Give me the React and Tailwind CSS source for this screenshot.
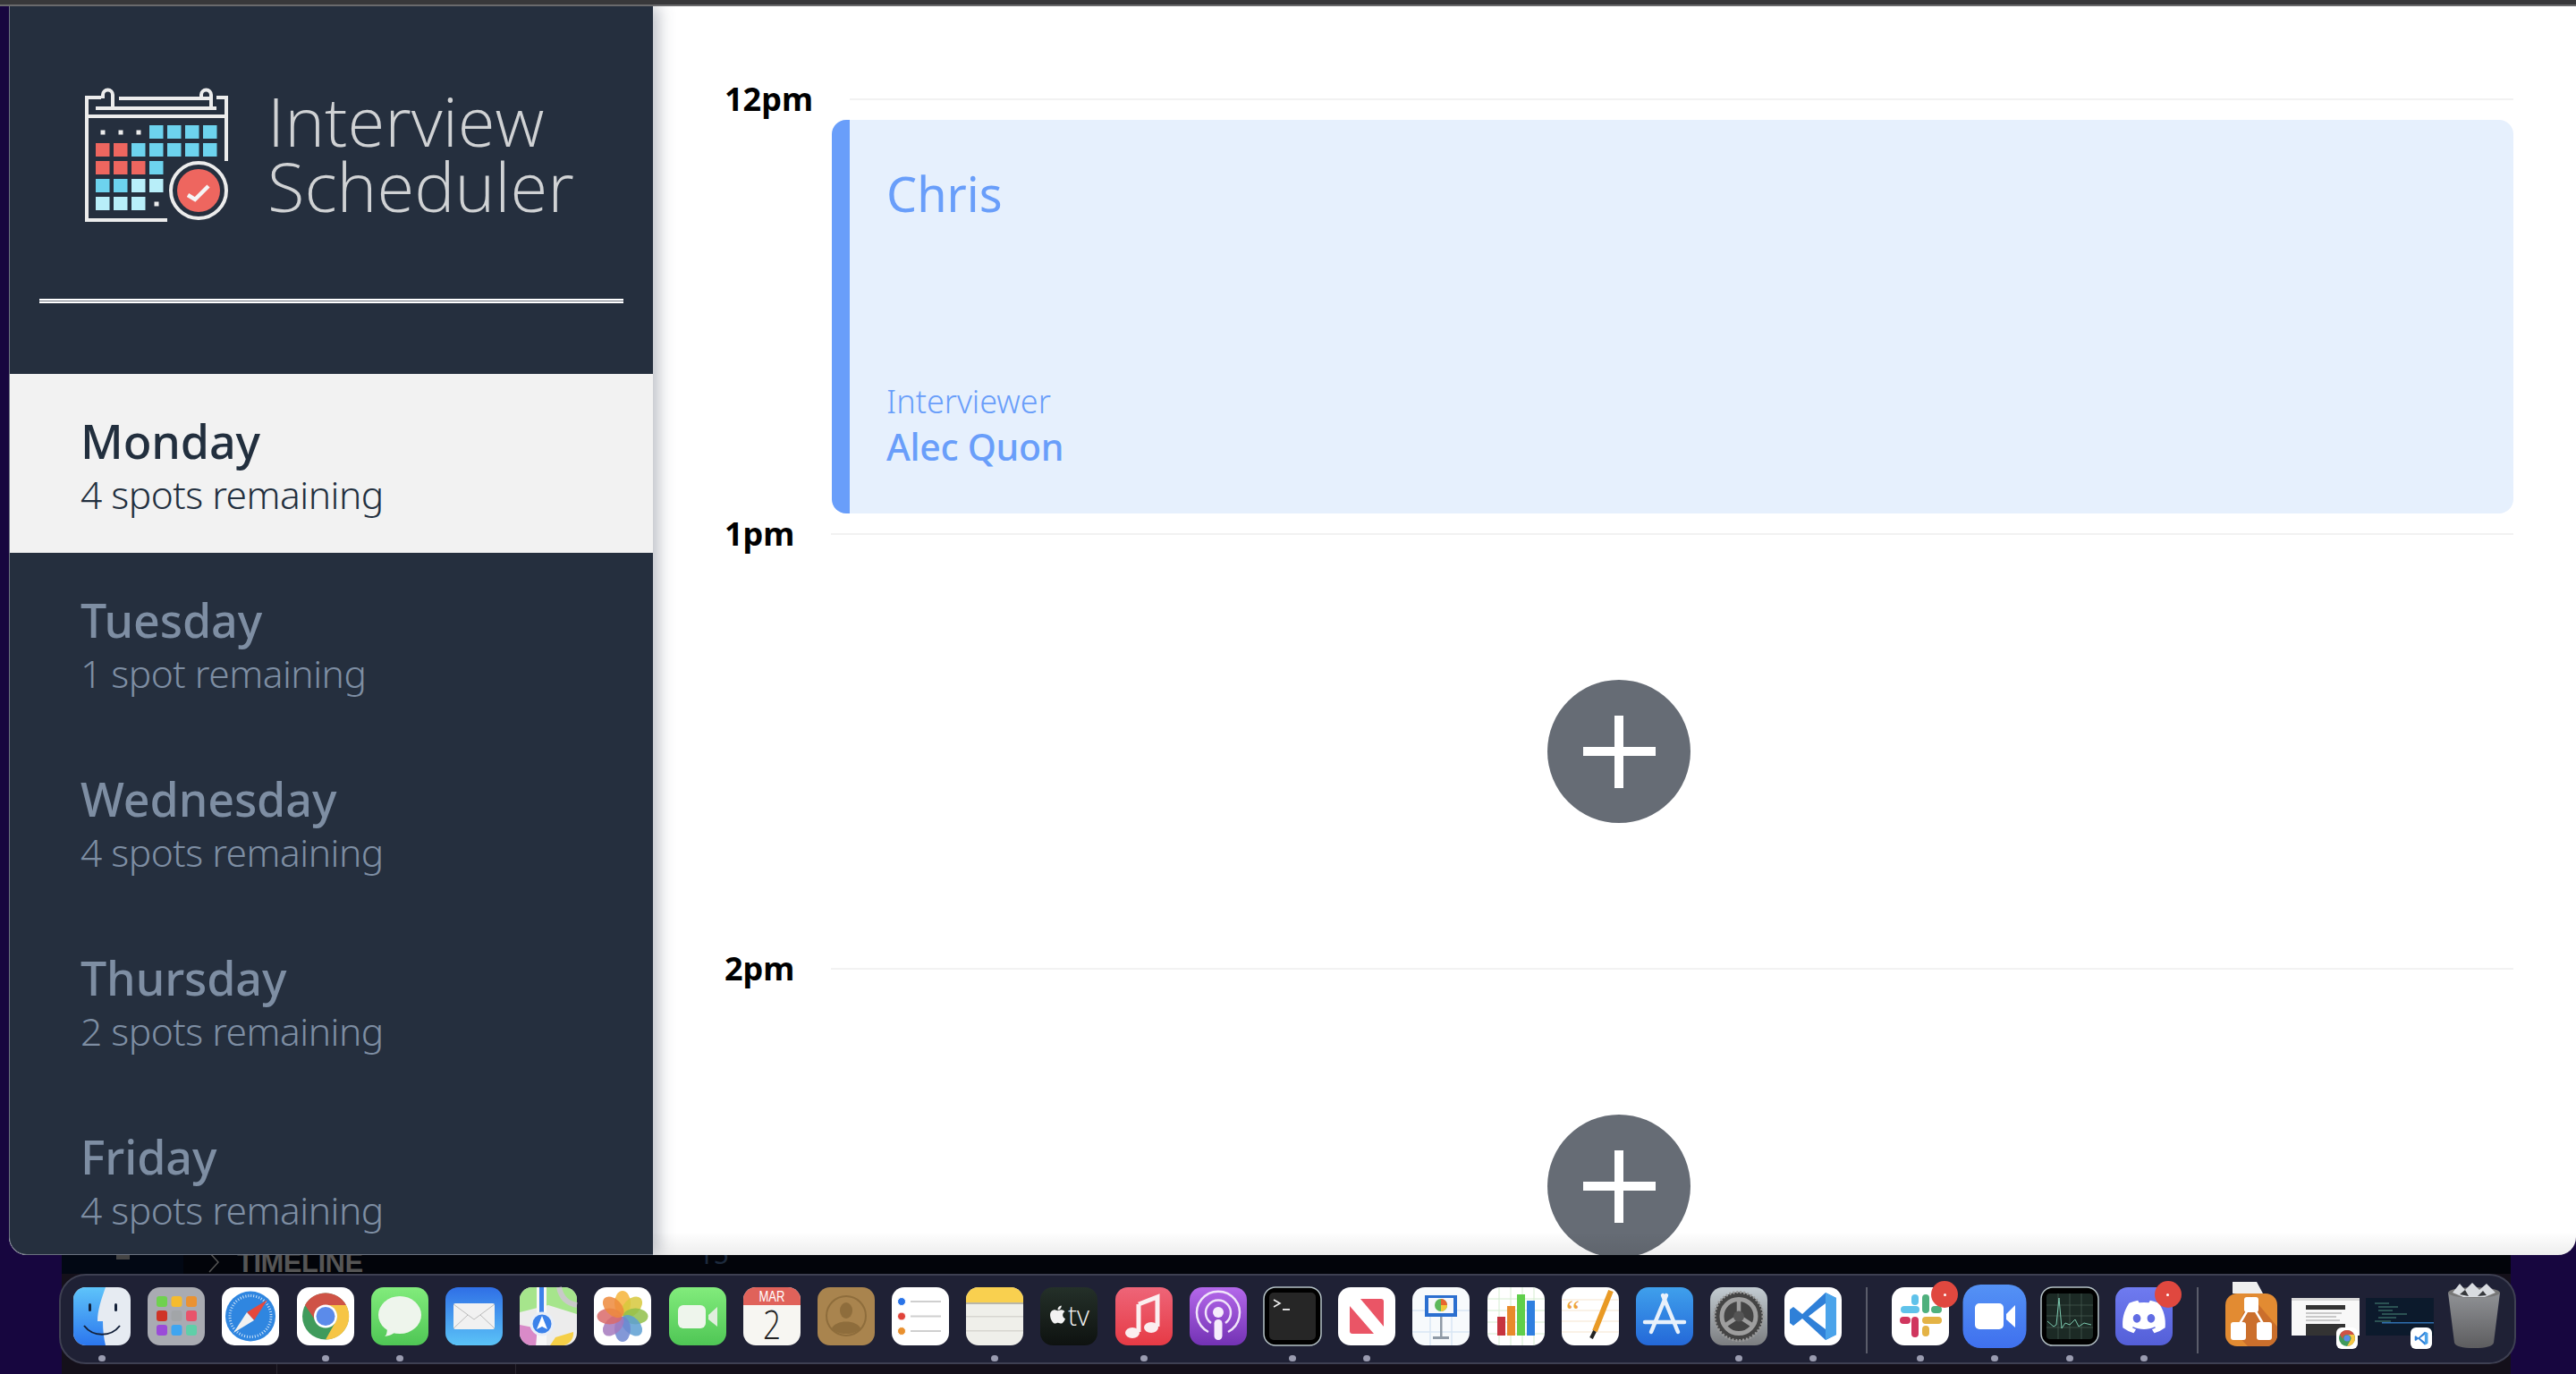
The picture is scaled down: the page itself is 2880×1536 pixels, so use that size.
import React from "react";
import { FaApple, FaDiscord } from "react-icons/fa";

const days = [
  { name: "Monday", spots: "4 spots remaining", active: true },
  { name: "Tuesday", spots: "1 spot remaining" },
  { name: "Wednesday", spots: "4 spots remaining" },
  { name: "Thursday", spots: "2 spots remaining" },
  { name: "Friday", spots: "4 spots remaining" },
];

const Logo = () => {
  const cols = [37, 57, 77, 97, 117, 137, 157];
  const rows = [60, 80, 100, 120, 140];
  const c = "#6dd3ee";
  const r = "#ee665f";
  const l = "#b8eef9";
  const grid = [
    [0, 0, 0, c, c, c, c],
    [r, r, c, c, c, c, c],
    [r, r, r, c, 0, 0, 0],
    [c, c, l, l, 0, 0, 0],
    [l, l, l, 0, 0, 0, 0],
  ];
  return (
    <svg viewBox="25 18 160 150" className="w-[160px] h-[150px] shrink-0">
      <g fill="none" stroke="#ececec" strokeWidth="4">
        <path d="M43 29H27V166H117" />
        <path d="M63 30H164" />
        <path d="M172 29H183V100" />
        <path d="M37 41H172" />
        <path d="M27 50H183" />
        <path d="M45 30V26a5.5 5.5 0 0 1 11 0V41" />
        <path d="M155 30V26a5.5 5.5 0 0 1 11 0V41" />
        <circle cx="152" cy="133" r="31" />
      </g>
      {grid.map((row, y) =>
        row.map((fill, x) =>
          fill ? <rect key={`${x}-${y}`} x={cols[x]} y={rows[y]} width="15.5" height="15" fill={fill} /> : null
        )
      )}
      {[45, 65, 85].map((x) => (
        <rect key={x} x={x - 2.5} y="65.5" width="5" height="5" fill="#ececec" />
      ))}
      <rect x="102.5" y="145.5" width="5" height="5" fill="#ececec" />
      <circle cx="152" cy="133" r="24" fill="#ee665f" />
      <path d="M140 138l8 5 15-15" fill="none" stroke="#f5f5f5" strokeWidth="4.5" />
    </svg>
  );
};

const DayItem = ({ name, spots, active }) => (
  <div className={`h-[200px] shrink-0 flex flex-col justify-center pl-[79px] pt-[6px] ${active ? "bg-[#f2f2f2] text-[#222f3e]" : "text-[#7e8ea3]"}`}>
    <div className="text-[52px] leading-[62px] font-medium tracking-[-0.1px]">{name}</div>
    <div className="text-[42.5px] leading-[57px] font-light tracking-[-0.5px]">{spots}</div>
  </div>
);

const TimeRow = ({ label }) => (
  <div className="flex items-center h-[2px] gap-[41px]">
    <div className="text-[#000] text-[36px] font-bold leading-none whitespace-nowrap">{label}</div>
    <div className="flex-1 h-[2px] bg-[#f2f2f2]" />
  </div>
);

const AddButton = () => (
  <div className="h-[484px] flex items-center justify-center shrink-0">
    <div className="relative w-[160px] h-[160px] rounded-full bg-[#666c75] flex items-center justify-center">
      <div className="w-[81px] h-[10px] bg-white" />
      <div className="absolute w-[10px] h-[81px] bg-white" />
    </div>
  </div>
);

/* dock icons, all drawn in a 64x65 box */
const Svg = ({ children }) => (
  <svg viewBox="0 0 64 65" className="w-16 h-[65px] overflow-visible block">
    {children}
  </svg>
);
const Tile = ({ fill = "#fff" }) => <rect width="64" height="65" rx="14" fill={fill} />;
const Grad = ({ id, from, to }) => (
  <defs>
    <linearGradient id={id} x1="0" y1="0" x2="0" y2="1">
      <stop offset="0" stopColor={from} />
      <stop offset="1" stopColor={to} />
    </linearGradient>
  </defs>
);

const Finder = () => (
  <Svg>
    <Grad id="fd" from="#5ec4fa" to="#2b76ee" />
    <Tile fill="#e6ebf2" />
    <path d="M14 0H36C31 14 27 26 27 38H33C33 48 34 57 36 65H14A14 14 0 0 1 0 51V14A14 14 0 0 1 14 0Z" fill="url(#fd)" />
    <rect x="17" y="18" width="3" height="9" rx="1.5" fill="#14213a" />
    <rect x="46" y="18" width="3" height="9" rx="1.5" fill="#14213a" />
    <path d="M12 43C22 56 42 56 52 43" fill="none" stroke="#14213a" strokeWidth="2" />
  </Svg>
);

const Launchpad = () => {
  const colors = ["#6fd14f", "#f5bb2e", "#ea9232", "#cf3427", "#a2a5a8", "#e8536b", "#9a4bd8", "#3fa5f0", "#5fcfa8"];
  return (
    <Svg>
      <Tile fill="#a9abb2" />
      {colors.map((fill, i) => (
        <rect key={fill} x={10 + (i % 3) * 16.5} y={10 + Math.floor(i / 3) * 16} width="12" height="12" rx="3" fill={fill} />
      ))}
    </Svg>
  );
};

const Safari = () => (
  <Svg>
    <Tile />
    <circle cx="32" cy="32.5" r="28" fill="#2f86e0" />
    <circle cx="32" cy="32.5" r="23" fill="none" stroke="#cfe4f8" strokeWidth="3" strokeDasharray="1 2" />
    <path d="M51 14L36 37L28 28Z" fill="#e5483c" />
    <path d="M13 51L36 37L28 28Z" fill="#f1f1f1" />
  </Svg>
);

const Chrome = () => (
  <Svg>
    <Tile />
    <circle cx="32" cy="32.5" r="26" fill="#3f9b5c" />
    <path d="M32 6.5A26 26 0 0 1 55 20H32A12.5 12.5 0 0 0 20.5 37L9 20A26 26 0 0 1 32 6.5Z" fill="#cf5346" />
    <path d="M55 20A26 26 0 0 1 32 58.5L43 39A12.5 12.5 0 0 0 32 20Z" fill="#f6c545" />
    <circle cx="32" cy="32.5" r="13" fill="#fff" />
    <circle cx="32" cy="32.5" r="10.5" fill="#5b8bea" />
  </Svg>
);

const Messages = () => (
  <Svg>
    <Grad id="ms" from="#82ec7c" to="#4fc655" />
    <Tile fill="url(#ms)" />
    <ellipse cx="32" cy="31" rx="24" ry="21" fill="#eef5ec" />
    <path d="M18 44C18 50 17 54 15 55C22 54 27 51 29 48Z" fill="#eef5ec" />
  </Svg>
);

const Mail = () => (
  <Svg>
    <Grad id="ml" from="#2f6fe6" to="#5bc3f7" />
    <Tile fill="url(#ml)" />
    <rect x="9" y="18" width="46" height="29" rx="2" fill="#f1f1f1" />
    <path d="M9 19L32 36L55 19M9 46L25 31M55 46L39 31" fill="none" stroke="#bcbcbc" strokeWidth="1" />
  </Svg>
);

const Maps = () => (
  <Svg>
    <Tile fill="#ececec" />
    <path d="M14 0H50A14 14 0 0 1 64 14V30L32 20L0 28V14A14 14 0 0 1 14 0Z" fill="#a6e58c" />
    <path d="M0 42L20 46L18 65H14A14 14 0 0 1 0 51Z" fill="#d98ac8" />
    <path d="M40 56L60 50A14 14 0 0 1 50 65H34Z" fill="#f5cf47" />
    <rect x="19" y="0" width="11" height="65" fill="#f7f7f7" />
    <rect x="22" y="0" width="5" height="30" fill="#3c82ea" />
    <path d="M44 0C46 10 52 18 64 20" fill="none" stroke="#c9c9c9" strokeWidth="6" />
    <circle cx="25" cy="41" r="12" fill="#3c82ea" stroke="#e8eef8" strokeWidth="3" />
    <path d="M25 32L31 47L25 44L19 47Z" fill="#fff" />
  </Svg>
);

const Photos = () => {
  const petals = ["#f6b43a", "#d7c83c", "#90bf4a", "#5d9fd2", "#6d86d0", "#a579bd", "#d96a6a", "#ed8a3c"];
  return (
    <Svg>
      <Tile />
      {petals.map((fill, i) => (
        <ellipse key={fill} cx="32" cy="18" rx="9" ry="14" fill={fill} opacity="0.85" transform={`rotate(${i * 45} 32 32.5)`} />
      ))}
    </Svg>
  );
};

const Facetime = () => (
  <Svg>
    <Grad id="ft" from="#82ec7c" to="#4fc655" />
    <Tile fill="url(#ft)" />
    <rect x="10" y="20" width="31" height="26" rx="6" fill="#eef5ec" />
    <path d="M44 31L54 22V44L44 36Z" fill="#dfeedd" />
  </Svg>
);

const Calendar = () => (
  <Svg>
    <Tile fill="#f7f6f2" />
    <path d="M14 0H50A14 14 0 0 1 64 14V20H0V14A14 14 0 0 1 14 0Z" fill="#e0625a" />
    <text x="32" y="16" textAnchor="middle" fontSize="17" fontFamily="Liberation Sans, sans-serif" fill="#fff" textLength="29" lengthAdjust="spacingAndGlyphs">MAR</text>
    <text x="32" y="58" textAnchor="middle" fontSize="44" fontFamily="Open Sans, sans-serif" fontWeight="300" fill="#222" textLength="20" lengthAdjust="spacingAndGlyphs">2</text>
  </Svg>
);

const Contacts = () => (
  <Svg>
    <Tile fill="#a9844e" />
    <circle cx="32" cy="32" r="22" fill="none" stroke="#8e6d3c" strokeWidth="2" />
    <ellipse cx="32" cy="26" rx="7" ry="9" fill="#8e6d3c" />
    <path d="M16 46C20 36 44 36 48 46C42 54 22 54 16 46Z" fill="#8e6d3c" />
  </Svg>
);

const Reminders = () => (
  <Svg>
    <Tile />
    {[["#2a74e8", 16], ["#e0433a", 32.5], ["#e9902e", 49]].map(([fill, y]) => (
      <g key={fill}>
        <circle cx="11" cy={y} r="4.5" fill={fill} stroke="#fff" strokeWidth="1" />
        <rect x="21" y={y - 1} width="34" height="2" fill="#cfcfcf" />
      </g>
    ))}
  </Svg>
);

const Notes = () => (
  <Svg>
    <Tile fill="#efefea" />
    <path d="M14 0H50A14 14 0 0 1 64 14V17H0V14A14 14 0 0 1 14 0Z" fill="#f9d04f" />
    <rect y="17" width="64" height="2" fill="#b9b6a8" />
    <rect y="32" width="64" height="1.5" fill="#d7d6d0" />
    <rect y="48" width="64" height="1.5" fill="#d7d6d0" />
  </Svg>
);

const Tv = () => (
  <Svg>
    <Grad id="tv" from="#243029" to="#0e1210" />
    <Tile fill="url(#tv)" />
    <FaApple x="8" y="19" size={23} fill="#f2f2f2" />
    <text x="31" y="43" fontSize="31" fontFamily="Open Sans, sans-serif" fontWeight="300" fill="#f2f2f2" textLength="24" lengthAdjust="spacingAndGlyphs">tv</text>
  </Svg>
);

const Music = () => (
  <Svg>
    <Grad id="mu" from="#ee6578" to="#e63a45" />
    <Tile fill="url(#mu)" />
    <path d="M26 19L47 11V44" fill="none" stroke="#fbeef0" strokeWidth="5" />
    <path d="M26 19V50" fill="none" stroke="#fbeef0" strokeWidth="5" />
    <ellipse cx="19" cy="51" rx="8" ry="6" fill="#fbeef0" />
    <ellipse cx="40" cy="45" rx="8" ry="6" fill="#fbeef0" />
  </Svg>
);

const Podcasts = () => (
  <Svg>
    <Grad id="pd" from="#b468ea" to="#7332b4" />
    <Tile fill="url(#pd)" />
    <g fill="none" stroke="#f1e5fa" strokeWidth="2.5">
      <path d="M21 50A24 24 0 1 1 43 50" />
      <path d="M24 40A14 14 0 1 1 40 40" />
    </g>
    <circle cx="32" cy="28" r="6" fill="#f6eefc" />
    <rect x="27.5" y="36" width="9" height="23" rx="4.5" fill="#f6eefc" />
  </Svg>
);

const Terminal = () => (
  <Svg>
    <rect width="64" height="65" rx="13" fill="#000" stroke="#b5c2c6" strokeWidth="1.5" />
    <rect x="6" y="6" width="52" height="53" rx="5" fill="#262626" />
    <path d="M11 14L18 18L11 22" fill="none" stroke="#eee" strokeWidth="1.6" />
    <rect x="21" y="24" width="8" height="1.8" fill="#eee" />
  </Svg>
);

const News = () => (
  <Svg>
    <Tile />
    <rect x="13" y="13" width="38" height="39" rx="3" fill="#ea5566" />
    <path d="M13 13H25L51 44V52H40L13 21Z" fill="#fff" />
  </Svg>
);

const Keynote = () => (
  <Svg>
    <Tile fill="#f7fafc" />
    <path d="M0 26H64M0 50H64M20 14V65M44 14V65" stroke="#d9e6f3" strokeWidth="1.5" />
    <rect x="14" y="9" width="36" height="24" fill="#2b6fd0" />
    <rect x="18" y="12" width="28" height="17" fill="#f5f7fb" />
    <circle cx="32" cy="20" r="7" fill="#5cb85c" />
    <path d="M32 13A7 7 0 0 1 39 20H32Z" fill="#e9662f" />
    <path d="M32 20H39A7 7 0 0 1 32 27Z" fill="#f0c93a" />
    <rect x="31" y="33" width="2.5" height="23" fill="#8f9aa6" />
    <rect x="23" y="55" width="18" height="3" fill="#8f9aa6" />
  </Svg>
);

const Numbers = () => (
  <Svg>
    <Tile />
    <path d="M0 13H64M0 26H64M0 39H64M0 52H64M13 0V65M26 0V65M39 0V65M52 0V65" stroke="#d4edd0" strokeWidth="1" />
    <rect x="11" y="33" width="9" height="21" fill="#c7343f" />
    <rect x="22" y="21" width="9" height="33" fill="#e88a2b" />
    <rect x="33" y="8" width="9" height="46" fill="#5fcf4b" />
    <rect x="44" y="15" width="9" height="39" fill="#2f7fe0" />
  </Svg>
);

const Pages = () => (
  <Svg>
    <Tile />
    <path d="M0 14H64M0 26H64M0 38H64M0 50H64" stroke="#f6e5cf" strokeWidth="1" />
    <text x="5" y="38" fontSize="34" fontFamily="Liberation Serif, serif" fill="#eda23a">“</text>
    <path d="M55 4L37 49" stroke="#e99a25" strokeWidth="6" />
    <path d="M37 49L33 57" stroke="#222" strokeWidth="4" />
  </Svg>
);

const AppStore = () => (
  <Svg>
    <Grad id="as" from="#3fa0ec" to="#2468d8" />
    <Tile fill="url(#as)" />
    <g stroke="#e8f1fb" strokeWidth="4.5" strokeLinecap="round" fill="none">
      <path d="M34 9L17 50" />
      <path d="M30 9L47 50" />
      <path d="M10 39H54" />
    </g>
  </Svg>
);

const Prefs = () => (
  <Svg>
    <Grad id="sp" from="#c3ccd2" to="#7b7d80" />
    <Tile fill="url(#sp)" />
    <circle cx="32" cy="32.5" r="27" fill="#444" />
    <circle cx="32" cy="32.5" r="27" fill="none" stroke="#9a9a9a" strokeWidth="3" strokeDasharray="2 2" />
    <circle cx="32" cy="32.5" r="19" fill="none" stroke="#9e9e9e" strokeWidth="5" />
    <path d="M32 32.5V14M32 32.5L16 43M32 32.5L48 43" stroke="#9e9e9e" strokeWidth="4.5" />
    <circle cx="32" cy="32.5" r="6" fill="#555" />
  </Svg>
);

const VsCode = () => (
  <>
    <path d="M46 6L58 12V53L46 59L20 35L10 43L6 40V25L10 22L20 30Z" fill="#2f80d8" />
    <path d="M46 6L58 12V53L46 59Z" fill="#4aa3ea" />
    <path d="M46 18L27 32.5L46 47Z" fill="#fff" />
  </>
);

const Vscode = () => (
  <Svg>
    <Tile />
    <VsCode />
  </Svg>
);

const Slack = () => (
  <Svg>
    <Tile />
    <rect x="10" y="21" width="21" height="8" rx="4" fill="#5fc2ea" />
    <rect x="22" y="8" width="8" height="12" rx="4" fill="#5fc2ea" />
    <rect x="34" y="8" width="8" height="21" rx="4" fill="#4fb07d" />
    <rect x="44" y="21" width="12" height="8" rx="4" fill="#4fb07d" />
    <rect x="34" y="33" width="22" height="8" rx="4" fill="#e4b345" />
    <rect x="34" y="43" width="8" height="12" rx="4" fill="#e4b345" />
    <rect x="22" y="33" width="8" height="23" rx="4" fill="#d0365e" />
    <rect x="9" y="33" width="12" height="8" rx="4" fill="#d0365e" />
  </Svg>
);

const Zoom = () => (
  <Svg>
    <Grad id="zm" from="#5492f5" to="#3f70ee" />
    <rect x="-3.5" y="-3" width="71" height="71" rx="20" fill="url(#zm)" />
    <rect x="10" y="18" width="32" height="29" rx="5" fill="#fff" />
    <path d="M45 30L55 20V45L45 36Z" fill="#fff" />
  </Svg>
);

const Activity = () => (
  <Svg>
    <rect width="64" height="65" rx="13" fill="#000" stroke="#b5c2c6" strokeWidth="1.5" />
    <rect x="6" y="7" width="52" height="51" rx="4" fill="#1c2a25" />
    <path d="M6 20H58M6 32H58M6 45H58M19 7V58M32 7V58M45 7V58" stroke="#45594f" strokeWidth="0.8" />
    <path d="M7 38L14 44L17 42L20 12L23 46L27 40L32 42L38 36L42 44L48 40L56 42" fill="none" stroke="#7ccab0" strokeWidth="1" />
  </Svg>
);

const Discord = () => (
  <Svg>
    <Grad id="dc" from="#6f7bf0" to="#545fd8" />
    <Tile fill="url(#dc)" />
    <FaDiscord x="6" y="7" size={52} fill="#fff" />
  </Svg>
);

const Drawio = () => (
  <Svg>
    <path d="M11 7V-6H38L45 7Z" fill="#efefef" />
    <rect x="3" y="7" width="58" height="59" rx="13" fill="#e28b32" />
    <path d="M32 10L61 44V53A13 13 0 0 1 48 66H28L13 50Z" fill="#cb6f2c" />
    <path d="M30 22L17 44M34 22L47 44" stroke="#fff" strokeWidth="2.5" />
    <rect x="24" y="11" width="16" height="17" rx="3" fill="#fff" />
    <rect x="9" y="39" width="17" height="20" rx="3" fill="#fff" />
    <rect x="38" y="39" width="17" height="20" rx="3" fill="#fff" />
  </Svg>
);

const ChromeThumb = () => (
  <Svg>
    <rect x="-6" y="12" width="76" height="42" fill="#f8f8f8" />
    <rect x="-6" y="12" width="76" height="3" fill="#d9d9d9" />
    <rect x="10" y="20" width="44" height="5" fill="#333" />
    <path d="M10 29H50M10 33H44M10 37H48" stroke="#9a9a9a" strokeWidth="1" />
    <rect x="10" y="41" width="44" height="13" fill="#333" />
    <rect x="44" y="45" width="24" height="24" rx="6" fill="#fff" />
    <circle cx="56" cy="57" r="9" fill="#3f9b5c" />
    <path d="M56 48A9 9 0 0 1 64 53H56A4 4 0 0 0 52 59L48 53A9 9 0 0 1 56 48Z" fill="#cf5346" />
    <path d="M64 53A9 9 0 0 1 56 66L60 59A4 4 0 0 0 56 53Z" fill="#f6c545" />
    <circle cx="56" cy="57" r="3.5" fill="#5b8bea" />
  </Svg>
);

const CodeThumb = () => (
  <Svg>
    <rect x="-6" y="12" width="76" height="42" fill="#0c1a2c" />
    <path d="M4 18H20M8 22H30M8 26H24M12 30H40M8 34H28M4 38H22" stroke="#4a8a7a" strokeWidth="1" />
    <rect x="12" y="39" width="58" height="1.5" fill="#2f6fb0" />
    <rect x="44" y="45" width="24" height="24" rx="6" fill="#fff" />
    <g transform="translate(47 48) scale(0.28)">
      <VsCode />
    </g>
  </Svg>
);

const Trash = () => (
  <Svg>
    <Grad id="tr" from="#909296" to="#5d5d5f" />
    <path d="M3 6L10 62Q12 68 32 68Q52 68 54 62L61 6Z" fill="url(#tr)" />
    <ellipse cx="32" cy="6" rx="29" ry="6" fill="#777" />
    <path d="M8 6L16 -4L22 3L30 -5L38 3L46 -4L56 6L44 11H20Z" fill="#d8dbe0" />
    <path d="M16 8L22 3L26 10ZM36 10L42 4L46 9Z" fill="#36383c" />
  </Svg>
);

const dock = [
  { key: "finder", Icon: Finder, dot: true },
  { key: "launchpad", Icon: Launchpad },
  { key: "safari", Icon: Safari },
  { key: "chrome", Icon: Chrome, dot: true },
  { key: "messages", Icon: Messages, dot: true },
  { key: "mail", Icon: Mail },
  { key: "maps", Icon: Maps },
  { key: "photos", Icon: Photos },
  { key: "facetime", Icon: Facetime },
  { key: "calendar", Icon: Calendar },
  { key: "contacts", Icon: Contacts },
  { key: "reminders", Icon: Reminders },
  { key: "notes", Icon: Notes, dot: true },
  { key: "tv", Icon: Tv },
  { key: "music", Icon: Music, dot: true },
  { key: "podcasts", Icon: Podcasts },
  { key: "terminal", Icon: Terminal, dot: true },
  { key: "news", Icon: News, dot: true },
  { key: "keynote", Icon: Keynote },
  { key: "numbers", Icon: Numbers },
  { key: "pages", Icon: Pages },
  { key: "appstore", Icon: AppStore },
  { key: "prefs", Icon: Prefs, dot: true },
  { key: "vscode", Icon: Vscode, dot: true },
  { key: "sep1", divider: true },
  { key: "slack", Icon: Slack, dot: true, badge: true },
  { key: "zoom", Icon: Zoom, dot: true },
  { key: "activity", Icon: Activity, dot: true },
  { key: "discord", Icon: Discord, dot: true, badge: true },
  { key: "sep2", divider: true },
  { key: "drawio", Icon: Drawio },
  { key: "chromethumb", Icon: ChromeThumb },
  { key: "codethumb", Icon: CodeThumb },
  { key: "trash", Icon: Trash },
];

const DockItem = ({ Icon, dot, badge }) => (
  <div className="relative w-16 shrink-0 flex flex-col items-center">
    <Icon />
    {dot && <div className="w-[8px] h-[7px] mt-[11px] rounded-full bg-[#9a9cb0]" />}
    {badge && (
      <div className="absolute -top-[7px] left-[44px] w-[30px] h-[30px] rounded-full bg-[#e0483f] flex items-center justify-center">
        <div className="w-[3px] h-[3px] rounded-full bg-white" />
      </div>
    )}
  </div>
);

const App = () => {
  return (
    <div className="w-[2880px] h-[1536px] overflow-hidden bg-[#17063f] flex flex-col font-['Noto_Sans',sans-serif]">
      <div className="h-[7px] shrink-0 bg-[#38383a] border-b-[2px] border-[#6a6a6c]" />

      {/* app window */}
      <div className="relative h-[1396px] shrink-0 ml-[10px] flex overflow-hidden rounded-b-[20px] bg-white">
        <aside className="w-[720px] shrink-0 bg-[#252f3e] flex flex-col shadow-[6px_0_18px_rgba(60,70,90,0.35)] z-10 rounded-bl-[20px] border-b-[1px] border-l-[1px] border-[#6b7280] overflow-hidden">
          <div className="h-[411px] shrink-0 flex flex-col">
            <div className="flex items-center gap-[46px] pl-[84px] pt-[91px]">
              <Logo />
              <div className="font-['Open_Sans',sans-serif] font-light text-[#d0d2d4] text-[76px] leading-[73px] -mt-[4px] -ml-[2px] whitespace-nowrap">
                <div>Interview</div>
                <div>Scheduler</div>
              </div>
            </div>
            <div className="mt-[86px] ml-[33px] w-[653px] h-[5px] bg-white flex items-center">
              <div className="w-full h-[1px] bg-[#6d7480]" />
            </div>
          </div>
          {days.map((day) => (
            <DayItem key={day.name} {...day} />
          ))}
        </aside>

        <main className="flex-1 flex flex-col pt-[103px] pl-[80px] pr-[70px]">
          <TimeRow label="12pm" />
          <div className="ml-[120px] mt-[22px] mb-[22px] h-[440px] shrink-0 rounded-[16px] border-l-[20px] border-[#699efa] bg-[#e6f0fd] text-[#699efa] flex flex-col justify-between pl-[41px] pt-[46px] pb-[49px]">
            <div className="text-[54px] leading-[72px]">Chris</div>
            <div>
              <div className="text-[36px] leading-[48px] font-light">Interviewer</div>
              <div className="text-[41px] leading-[52px] font-medium tracking-[-0.3px]">Alec Quon</div>
            </div>
          </div>
          <TimeRow label="1pm" />
          <AddButton />
          <TimeRow label="2pm" />
          <AddButton />
        </main>

        {/* window bottom fade */}
        <div className="absolute left-[720px] right-0 bottom-0 h-[26px] bg-gradient-to-b from-transparent to-[#00000012] pointer-events-none" />
      </div>

      {/* window behind + dock */}
      <div className="ml-[69px] w-[2738px] h-[133px] shrink-0 flex flex-col bg-[#14101a]">
        <div className="h-[21px] shrink-0 flex bg-[#02040a] overflow-hidden">
          <div className="w-[136px] shrink-0 bg-[#020814] flex justify-end">
            <div className="w-[15px] h-[5px] mr-[60px] bg-[#444]" />
          </div>
          <div className="flex items-center gap-[20px] pl-[28px] -mt-[5px] text-[#555] font-bold text-[31px] leading-none font-['Liberation_Sans',sans-serif]">
            <svg viewBox="0 0 12 24" className="w-[12px] h-[24px]">
              <path d="M1 1L11 12L1 23" fill="none" stroke="#555" strokeWidth="1.5" />
            </svg>
            <span className="tracking-[-0.5px]">TIMELINE</span>
          </div>
          <div className="ml-[375px] -mt-[16px] text-[#1d2a3d] text-[30px] leading-none">15</div>
        </div>

        <div className="-ml-[3px] w-[2747px] h-[101px] shrink-0 rounded-[30px] border-[2px] border-[#3e4052] bg-[#1f2135] pl-[14px] pt-[13px] flex items-start gap-[19.2px]">
          {dock.map(({ key, divider, ...item }) =>
            divider ? (
              <div key={key} className="w-[17.6px] h-[74px] shrink-0 flex justify-center">
                <div className="w-[2px] h-full bg-[#5a5c6a]" />
              </div>
            ) : (
              <DockItem key={key} {...item} />
            )
          )}
        </div>

        <div className="flex-1 flex pl-[240px]">
          <div className="w-[268px] border-x-[1px] border-[#2a2630]" />
        </div>
      </div>
    </div>
  );
};

export default App;
